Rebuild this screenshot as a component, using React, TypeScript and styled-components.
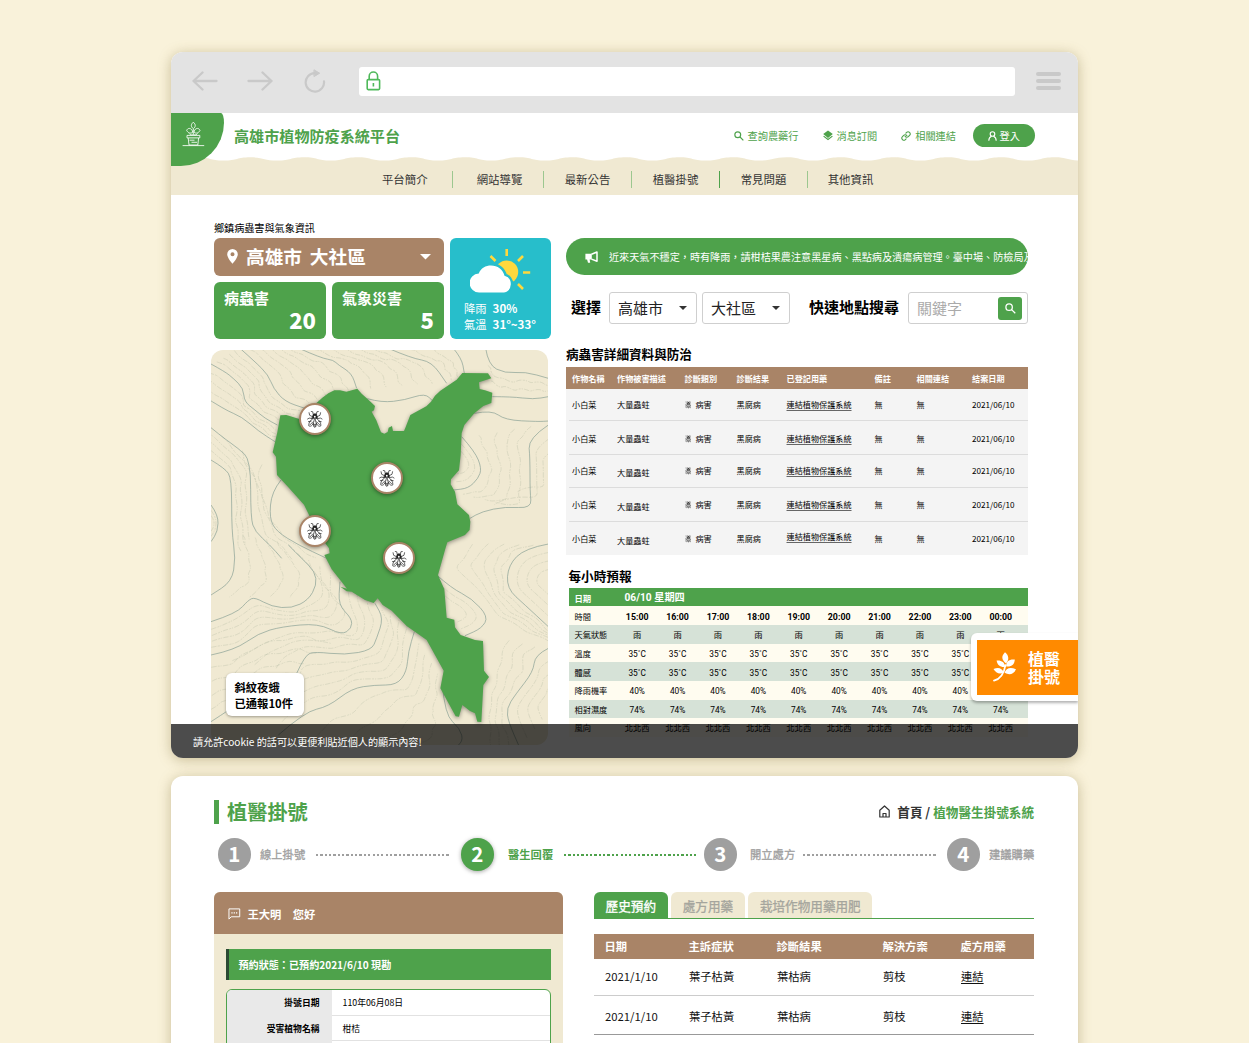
import React from 'react';
import styled, { createGlobalStyle, css } from 'styled-components';

const green = '#4ea24b';
const brown = '#a98467';
const sand = '#f0e9d2';
const grey = '#9f9f9f';
const cjk = `"Noto Sans CJK TC", "Noto Sans", sans-serif`;

const Global = createGlobalStyle`
  * { box-sizing: border-box; }
  html, body { margin: 0; padding: 0; }
  body { background: #f9f2da; font-family: ${cjk}; color: #000; overflow: hidden; }
`;

const Page = styled.main`
  width: 1249px;
  height: 1043px;
  overflow: hidden;
  padding: 52px 170.5px 0;
  display: flex;
  flex-direction: column;
  gap: 18px;
`;

const Window = styled.section<{ $h: number }>`
  position: relative;
  flex: none;
  width: 907.5px;
  height: ${p => p.$h}px;
  border-radius: 12px;
  background: #fff;
  box-shadow: 0 2px 13px rgba(130, 110, 50, 0.4);
`;

const Clip = styled.div`
  height: 100%;
  border-radius: 12px;
  overflow: hidden;
`;

/* ---------- browser bar ---------- */
const BrowserBar = styled.div`
  height: 61px;
  background: #e3e3e3;
  display: flex;
  align-items: center;
  padding: 0 17px 3px 21.5px;
`;
const Address = styled.div`
  width: 656px;
  height: 29px;
  border-radius: 3px;
  background: #fff;
  margin-left: 32.5px;
  padding-left: 7.5px;
  display: flex;
  align-items: center;
`;
const Burger = styled.div`
  width: 25px;
  height: 18px;
  margin-left: auto;
  display: flex;
  flex-direction: column;
  justify-content: space-between;
  i { height: 3.6px; border-radius: 2px; background: #c9c9c9; }
`;
const Gap = styled.span<{ $w: number }>`
  flex: none;
  width: ${p => p.$w}px;
`;

/* ---------- site header ---------- */
const Header = styled.header`
  height: 44px;
  display: flex;
  align-items: center;
  padding: 1px 43.5px 0 63.5px;
  color: ${green};
`;
const Brand = styled.h1`
  margin: 0;
  padding-bottom: 2px;
  font-size: 15.1px;
  line-height: 20px;
  font-weight: 700;
  flex: 1;
`;
const TopLink = styled.a<{ $gap: number }>`
  display: flex;
  align-items: center;
  gap: 4px;
  font-size: 10.2px;
  line-height: 16px;
  margin-right: ${p => p.$gap}px;
`;
const Login = styled.button`
  width: 61.5px;
  height: 23px;
  border: 0;
  border-radius: 12px;
  background: ${green};
  color: #fff;
  font: 10.2px/16px ${cjk};
  display: flex;
  align-items: center;
  justify-content: center;
  gap: 3px;
  padding: 0;
`;
const LogoCorner = styled.div`
  position: absolute;
  left: 0;
  top: 61px;
  width: 53px;
  height: 53px;
  background: ${green};
  border-radius: 0 3px 44px 0 / 0 10px 44px 0;
  padding: 8px 0 0 11.5px;
`;
const Nav = styled.nav`
  height: 38px;
  background: ${sand};
  position: relative;
  display: flex;
  padding: 14px 0 0 187px;
`;
const WaveArt = styled.svg`
  position: absolute;
  left: 0;
  top: 0;
`;
const NavItem = styled.a<{ $w: number; $first?: boolean; $strong?: boolean; $nudge?: number }>`
  width: ${p => p.$w}px;
  height: 17px;
  line-height: 17px;
  font-size: 11.4px;
  color: #333;
  text-align: center;
  border-left: ${p => (p.$first ? '0' : '1px')} solid ${p => (p.$strong ? green : '#9cc78f')};
  padding-left: ${p => p.$nudge || 0}px;
`;

/* ---------- dashboard ---------- */
const Content = styled.div`
  display: flex;
  padding: 25px 50px 0 40.5px;
  gap: 15px;
`;
const Left = styled.div`
  width: 340px;
  padding-left: 3px;
`;
const Caption = styled.div`
  font-size: 10.1px;
  line-height: 15px;
  height: 18px;
`;
const Cards = styled.div`
  display: grid;
  grid-template-columns: 112px 112px 101px;
  grid-template-rows: 37.5px 57px;
  gap: 6px;
`;
const PlaceCard = styled.div`
  grid-column: 1 / 3;
  background: ${brown};
  border-radius: 6px;
  color: #fff;
  display: flex;
  align-items: center;
  padding: 0 13px;
  font-size: 18.7px;
  line-height: 26px;
  font-weight: 700;
  span { flex: 1; margin-left: 8px; padding-bottom: 1.5px; word-spacing: 3.5px; }
`;
const CountCard = styled.div`
  background: ${green};
  border-radius: 6px;
  color: #fff;
  font-weight: 700;
  padding: 6px 10px;
  display: flex;
  flex-direction: column;
  span { font-size: 15px; line-height: 19px; }
  b { font-size: 22px; line-height: 24px; text-align: right; }
`;
const WeatherCard = styled.div`
  grid-column: 3;
  grid-row: 1 / 3;
  background: #27becb;
  border-radius: 6px;
  color: #fff;
  padding: 10px 0 0 14px;
  font-size: 11.3px;
  svg { display: block; margin: 0 0 6px 6px; }
`;
const WeatherLine = styled.div`
  line-height: 16px;
  white-space: nowrap;
  b { margin-left: 6px; font-size: 11.5px; }
`;
const MapBox = styled.div`
  position: relative;
  margin: 11px 0 0 -3px;
  width: 337px;
  height: 395px;
  border-radius: 12px;
  background: ${sand};
  overflow: hidden;
`;
const Pin = styled.div<{ $x: number; $y: number }>`
  position: absolute;
  left: ${p => p.$x - 16}px;
  top: ${p => p.$y - 16}px;
  width: 32px;
  height: 32px;
  border-radius: 50%;
  border: 2px solid ${brown};
  background: #fff;
  box-shadow: 0 1px 4px rgba(0, 0, 0, 0.45);
  display: flex;
  align-items: center;
  justify-content: center;
  padding-top: 2px;
`;
const MapNote = styled.div`
  position: absolute;
  left: 15px;
  top: 323px;
  width: 78px;
  height: 43px;
  border-radius: 6px;
  background: #fff;
  box-shadow: 0 1px 3px rgba(0, 0, 0, 0.35);
  padding: 6px 0 0 8.5px;
  font-size: 11.3px;
  line-height: 16.5px;
  font-weight: 700;
  white-space: nowrap;
`;

const Right = styled.div`
  width: 462px;
  padding-top: 18px;
`;
const Notice = styled.div`
  height: 37px;
  border-radius: 19px;
  background: ${green};
  color: #fff;
  overflow: hidden;
  display: flex;
  align-items: center;
  gap: 11px;
  padding-left: 19px;
  font-size: 10.12px;
  white-space: nowrap;
  svg { flex: none; }
`;
const Filters = styled.div`
  display: flex;
  align-items: center;
  margin-top: 17px;
  height: 32px;
  font-size: 15px;
  line-height: 20px;
  padding-left: 5px;
  b { white-space: nowrap; padding-bottom: 2px; }
`;
const Select = styled.div`
  width: 88px;
  height: 32px;
  border: 1px solid #cfcfcf;
  border-radius: 3px;
  display: flex;
  align-items: center;
  justify-content: space-between;
  padding: 0 9px 0 8px;
  color: #222;
`;
const SearchBox = styled.div`
  width: 120px;
  height: 32px;
  border: 1px solid #cfcfcf;
  border-radius: 3px;
  display: flex;
  align-items: center;
  justify-content: space-between;
  padding: 0 5px 0 8px;
  color: #aaa;
`;
const SearchButton = styled.span`
  width: 24px;
  height: 23px;
  border-radius: 3px;
  background: ${green};
  color: #fff;
  display: flex;
  align-items: center;
  justify-content: center;
`;
const SectionTitle = styled.h2<{ $top: number; $left?: number }>`
  margin: ${p => p.$top}px 0 0 ${p => p.$left || 0}px;
  font-size: 12.6px;
  line-height: 20px;
  font-weight: 700;
`;
const pestGrid = css`
  display: grid;
  grid-template-columns: 45px 67.5px 52px 50px 88px 42px 55.5px 1fr;
  align-items: center;
`;
const PestTable = styled.div`
  width: 461.5px;
  margin-top: 3px;
  background: #f4f4f4;
  font-size: 8.15px;
  line-height: 12px;
  white-space: nowrap;
`;
const PestHead = styled.div`
  ${pestGrid}
  height: 22px;
  padding: 2px 0 0 6px;
  background: ${brown};
  color: #fff;
  font-weight: 700;
`;
const PestRow = styled.div<{ $h: number; $pad: number; $last?: boolean }>`
  ${pestGrid}
  height: ${p => p.$h}px;
  margin-left: 2.5px;
  padding: ${p => p.$pad}px 0 0 3.5px;
  border-bottom: ${p => (p.$last ? '0' : '1px')} solid #dcdcdc;
`;
const Drop = styled.span<{ $y?: number }>`
  padding-top: ${p => (p.$y && p.$y > 0 ? p.$y * 2 : 0)}px;
  padding-bottom: ${p => (p.$y && p.$y < 0 ? -p.$y * 2 : 0)}px;
  display: flex;
  align-items: center;
  gap: 4px;
  u { text-underline-offset: 1.5px; text-decoration-thickness: 1px; text-decoration-color: #666; }
`;
const HourTable = styled.div`
  width: 459px;
  margin: 2px 0 0 2.5px;
  font-size: 8.2px;
  line-height: 12px;
  white-space: nowrap;
`;
const HourHead = styled.div`
  display: flex;
  align-items: center;
  height: 18.7px;
  background: ${green};
  color: #fff;
  padding: 1px 0 0 6px;
  b { font-size: 10.2px; width: 50px; }
  b:first-child { font-size: 8.4px; }
  b + b { width: auto; font-family: Roboto, ${cjk}; }
`;
const HourRow = styled.div<{ $tint?: boolean; $bold?: boolean }>`
  display: grid;
  grid-template-columns: 42.5px repeat(10, 40.4px);
  align-items: center;
  height: 18.65px;
  padding: 2px 0 0 6px;
  background: ${p => (p.$tint ? '#d6e2d7' : '#fffcf0')};
  font-family: Roboto, ${cjk};
  &:last-child { padding-top: 0; }
  span {
    text-align: center;
    font-weight: ${p => (p.$bold ? 700 : 400)};
    font-size: ${p => (p.$bold ? 8.8 : 8.3)}px;
  }
`;

const Floating = styled.aside`
  position: absolute;
  right: 0;
  top: 581px;
  width: 107.5px;
  height: 68px;
  border-radius: 6px 0 0 6px;
  background: #fff;
  box-shadow: 0 2px 3px rgba(0, 0, 0, 0.3);
  clip-path: inset(-8px 0 -8px -8px);
  padding: 6.5px 0 0 6.5px;
`;
const FloatingInner = styled.div`
  height: 55px;
  background: #ff8a00;
  color: #fff;
  display: flex;
  align-items: center;
  padding-left: 16px;
  gap: 11px;
  font-size: 16px;
  line-height: 18px;
  font-weight: 700;
`;
const Cookie = styled.div`
  position: absolute;
  left: 0;
  right: 0;
  bottom: 0;
  height: 34px;
  border-radius: 0 0 12px 12px;
  background: rgba(0, 0, 0, 0.7);
  color: #fff;
  font-size: 10.12px;
  line-height: 35px;
  padding-left: 22.5px;
`;

/* ---------- appointment page ---------- */
const Booking = styled.div`
  padding: 24px 44px 0 43.5px;
`;
const Row = styled.div`
  display: flex;
  align-items: center;
  justify-content: space-between;
`;
const PageTitle = styled.h2`
  margin: 0;
  height: 24px;
  border-left: 5px solid ${green};
  padding-left: 8px;
  color: ${green};
  font-size: 20.2px;
  line-height: 23px;
  font-weight: 700;
`;
const Crumbs = styled.div`
  display: flex;
  align-items: center;
  font-size: 12.6px;
  line-height: 20px;
  font-weight: 700;
  color: #333;
  padding-bottom: 1px;
  svg { margin-right: 7px; }
  em { font-style: normal; color: ${green}; margin-left: 3px; }
`;
const Steps = styled.div`
  display: grid;
  grid-template-columns: 243px 243px 243px 1fr;
  margin-top: 14px;
  padding-left: 4px;
`;
const Step = styled.div<{ $on?: boolean }>`
  display: flex;
  align-items: center;
  color: ${p => (p.$on ? green : grey)};
  font-weight: ${p => (p.$on ? 700 : 400)};
  -webkit-text-stroke: ${p => (p.$on ? 0 : 0.3)}px currentColor;
  font-size: 11.3px;
  white-space: nowrap;
`;
const Badge = styled.span<{ $on?: boolean }>`
  width: 32.5px;
  height: 32.5px;
  flex: none;
  border-radius: 50%;
  background: ${p => (p.$on ? green : grey)};
  box-shadow: ${p => (p.$on ? '0 1px 4px rgba(0,0,0,.35)' : 'none')};
  color: #fff;
  font-size: 20.5px;
  line-height: 31px;
  font-weight: 700;
  -webkit-text-stroke: 0;
  text-align: center;
`;
const Dots = styled.i<{ $ml: number }>`
  width: 132.500px;
  flex: none;
  height: 2px;
  margin-left: ${p => p.$ml}px;
  margin-top: 1px;
  background: repeating-linear-gradient(90deg, currentColor 0 2.2px, transparent 2.2px 4.350px);
`;
const Columns = styled.div`
  display: flex;
  margin-top: 21px;
  gap: 31px;
  align-items: flex-start;
`;
const Panel = styled.div`
  width: 349px;
  height: 200px;
  border-radius: 6px 6px 0 0;
  overflow: hidden;
  background: ${sand};
`;
const PanelHead = styled.div`
  height: 42.5px;
  background: ${brown};
  color: #fff;
  display: flex;
  align-items: center;
  gap: 7px;
  padding: 2px 0 0 14px;
  font-size: 11.3px;
  font-weight: 700;
`;
const Status = styled.div`
  margin: 14.5px 12px 0;
  height: 31px;
  background: ${green};
  border-left: 3px solid #2c4a33;
  color: #fff;
  padding-left: 9.5px;
  font-size: 10.1px;
  line-height: 32px;
  font-weight: 700;
`;
const Details = styled.div`
  margin: 9.5px 12px 0;
  border: 1px solid ${green};
  border-radius: 6px;
  overflow: hidden;
  background: #fff;
`;
const Detail = styled.div`
  display: grid;
  grid-template-columns: 105px 1fr;
  height: 25.7px;
  border-bottom: 1px solid #e2e2e2;
  font-size: 8.8px;
  line-height: 26.5px;
  b { background: #e9e9e9; text-align: right; padding-right: 12.5px; }
  span { padding-left: 10.5px; }
`;
const History = styled.div`
  width: 440px;
`;
const Tabs = styled.div`
  display: flex;
  gap: 3.6px;
  border-bottom: 1px solid ${green};
  height: 27px;
`;
const Tab = styled.div<{ $on?: boolean }>`
  height: 26px;
  border-radius: 6px 6px 0 0;
  padding: 0 11.6px;
  background: ${p => (p.$on ? green : sand)};
  color: ${p => (p.$on ? '#fff' : '#a5a59d')};
  font-size: 12.6px;
  -webkit-text-stroke: 0.3px currentColor;
  line-height: 28px;
`;
const HistoryRow = styled.div<{ $head?: boolean; $h: number; $line?: string; $pt?: number; $pb?: number }>`
  display: grid;
  grid-template-columns: 84px 88px 106px 78px 1fr;
  align-items: center;
  height: ${p => p.$h}px;
  margin-top: ${p => (p.$head ? 15 : 0)}px;
  padding: ${p => p.$pt || 0}px 0 ${p => p.$pb || 0}px ${p => (p.$head ? 10.5 : 11)}px;
  background: ${p => (p.$head ? brown : 'transparent')};
  color: ${p => (p.$head ? '#fff' : '#111')};
  font-weight: ${p => (p.$head ? 700 : 400)};
  font-size: 11.3px;
  line-height: 16px;
  border-bottom: ${p => (p.$line ? `1px solid ${p.$line}` : '0')};
  u { text-underline-offset: 2px; text-decoration-thickness: 1px; }
`;

/* ---------- icons ---------- */
type IconProps = { size?: number };

const ArrowIcon = ({ flip }: { flip?: boolean }) => (
  <svg width="26" height="20" viewBox="0 0 26 20" fill="none" stroke="#c9c9c9" strokeWidth="2.3"
    strokeLinecap="round" strokeLinejoin="round" transform={flip ? 'scale(-1 1)' : undefined}>
    <path d="M24.5 10H1.5M10.5 1.5L1.5 10l9 8.5" />
  </svg>
);
const ReloadIcon = () => (
  <svg width="22" height="24" viewBox="0 0 22 24" fill="none" stroke="#c9c9c9" strokeWidth="2.2" strokeLinecap="round">
    <path d="M10.500 4.200A9.200 9.200 0 1 0 20 12.300" />
    <path d="M10.3 1l5.400 3.200-5.400 3.200z" fill="#c9c9c9" strokeWidth="1" strokeLinejoin="round" />
  </svg>
);
const LockIcon = () => (
  <svg width="15" height="20" viewBox="0 0 15 20" fill="none" stroke="#4fb95a" strokeWidth="1.6">
    <rect x="1.2" y="8.6" width="12.4" height="10" rx="1" />
    <path d="M3.2 8.5V5.2a4.2 4.2 0 0 1 8.4 0v3.3M7.4 12v3.4" />
  </svg>
);
const PlantLogo = () => (
  <svg width="23" height="27" viewBox="0 0 23 27" fill="none" stroke="#fff" strokeWidth="0.85" strokeLinejoin="round">
    <path d="M11.3 1.2c2.6 2.3 2.6 4.4 0 6.6c-2.6-2.2-2.6-4.3 0-6.6zM11.300 7.800v6.400" />
    <path d="M10.700 11.300c-2.200 1.500-4.600.8-6-1.800c1-2.800 3.800-2.600 5.400-.4zM12 11.300c2.200 1.500 4.600.8 6-1.800c-1-2.800-3.800-2.600-5.400-.4z" />
    <path d="M10.800 13.800c-1.500.4-2.800 0-3.600-1.300M11.900 13.800c1.500.4 2.800 0 3.600-1.300" />
    <path d="M5 14.400h12.800v2.500H5zM6.200 17l.8 7h8.800l.8-7M7.500 19.200h5M9.500 21.300h5.500" />
    <path d="M.6 24.600h21.600" />
  </svg>
);
const SearchIcon = ({ size = 10 }: IconProps) => (
  <svg width={size} height={size} viewBox="0 0 12 12" fill="none" stroke="currentColor" strokeWidth="1.4">
    <circle cx="4.5" cy="4.5" r="3.5" />
    <path d="M7.2 7.2l4 4" />
  </svg>
);
const LayersIcon = () => (
  <svg width="10" height="11" viewBox="0 0 10 11" fill="currentColor">
    <path d="M5 .4l4.800 3.700L5 7.900.2 4.100zM1 5.700l4 3.100 4-3.100.8.700L5 10.200.200 6.400z" />
  </svg>
);
const LinkIcon = () => (
  <svg width="10" height="10" viewBox="0 0 24 24" fill="none" stroke="currentColor" strokeWidth="2.6" strokeLinecap="round">
    <path d="M10 13a5 5 0 0 0 7.540.54l3-3a5 5 0 0 0-7.070-7.070l-1.720 1.710" />
    <path d="M14 11a5 5 0 0 0-7.540-.54l-3 3a5 5 0 0 0 7.070 7.070l1.710-1.710" />
  </svg>
);
const UserIcon = () => (
  <svg width="9" height="10" viewBox="0 0 9 10" fill="none" stroke="currentColor" strokeWidth="1.1">
    <circle cx="4.5" cy="3" r="2.3" />
    <path d="M.8 9.800c0-2.600 1.200-4 2.700-4.500M8.200 9.800c0-2.600-1.200-4-2.700-4.500" />
  </svg>
);
const PlaceIcon = () => (
  <svg width="11" height="15" viewBox="0 0 11 15" fill="#fff" fillRule="evenodd">
    <path d="M5.500 0a5.300 5.300 0 0 0-5.300 5.300C.2 9 5.500 14.800 5.500 14.800S10.800 9 10.800 5.300A5.300 5.300 0 0 0 5.500 0zm0 7.200a2 2 0 1 1 0-4 2 2 0 0 1 0 4z" />
  </svg>
);
const Caret = ({ w, color }: { w: number; color: string }) => (
  <svg width={w} height={w / 2} viewBox="0 0 10 5" fill={color}><path d="M0 0h10L5 5z" /></svg>
);
const SunCloud = () => (
  <svg width="61" height="46" viewBox="0 0 61 46">
    <g stroke="#ffd83d" strokeWidth="2.6">
      <path d="M36.700 1v7M20.500 8l5 5M53 8l-5 5M53 24.500h7.200M48 36l5 5" />
    </g>
    <circle cx="36.700" cy="24" r="11.500" fill="#ffd83d" />
    <path d="M9.500 44.500a9.300 9.300 0 0 1-.7-19c2-5.500 7-8 12.200-8c6.500 0 12 4 13.500 10.300a8.600 8.600 0 0 1-.5 16.700z"
      fill="#fff" stroke="#27becb" strokeWidth="5" paintOrder="stroke" />
  </svg>
);
const HornIcon = () => (
  <svg width="13" height="12" viewBox="0 0 13 12">
    <path d="M6.500 3.200L12 1v9.300L6.500 8.100" fill="none" stroke="#fff" strokeWidth="1.5" strokeLinejoin="round" />
    <path d="M.4 2.800h6.400v5.800H.4zM2 8.200h2.600l.6 3.600H3z" fill="#fff" />
  </svg>
);
const FlyIcon = ({ size = 17 }: IconProps) => (
  <svg width={size * 0.92} height={size} viewBox="0.700 0 16.600 18" fill="none" stroke="#222" strokeWidth="0.75" strokeLinecap="round">
    <path d="M7.300 3.500L6.800.8 5.200.4M10.700 3.500l.5-2.700 1.600-.4M6.500 6L3.500 4.500 2.900 1.800M11.500 6l3-1.500.6-2.700M6 8L3 7.500 1.300 8.500M12 8l3-.5 1.700 1M5 10.800l-2.800.5M13 10.800l2.800.5" />
    <path d="M7 4.200c0-1.600 4-1.600 4 0l.8 3.600H6.200z" fill="#222" />
    <circle cx="9" cy="6.100" r="1" fill="#fff" stroke="none" />
    <path d="M7 8C4 9.800 2.200 13 2.600 15.800c2.600 1.300 5-1.200 5.900-7M11 8c3 1.800 4.800 5 4.400 7.800c-2.600 1.300-5-1.200-5.900-7" />
    <path d="M4 14.500l3-3M14 14.500l-3-3M7.500 13c0 2.400.5 4.200 1.500 4.600c1-.4 1.500-2.200 1.500-4.600M7.700 14.200h2.600M8 15.800h2" />
  </svg>
);
const SproutIcon = () => (
  <svg width="24" height="30" viewBox="0 0 24 30" fill="#fff">
    <path d="M1 28.600c6-1.500 10-6.500 11.400-15.500" stroke="#fff" strokeWidth="1.8" fill="none" strokeLinecap="round" />
    <path d="M13 11.500C8.300 7.500 8.300 4 12 .3c4 3.300 4.300 7.500 1 11.200z" />
    <path d="M12.300 15C7 15.500 4.400 13 3.600 8.500c5-.4 8.100 1.600 8.700 6.500z" />
    <path d="M10.800 20.500C6.500 22.600 2.700 21 .5 17c4.700-2.200 8.500-1.100 10.300 3.500z" />
    <path d="M13.200 14.500c-.2-5 3-7.600 8.600-7c-.2 5-3.200 7.600-8.600 7z" />
    <path d="M11.500 20.800c1.600-4.800 5.600-6 11.500-3.600c-2.300 5-6.500 6.200-11.500 3.600z" />
  </svg>
);
const HomeIcon = () => (
  <svg width="11" height="13" viewBox="0 0 11 13" fill="none" stroke="#333" strokeWidth="1.2" strokeLinejoin="round">
    <path d="M.8 5.200L5.500 1l4.700 4.200V12H.8zM4 12V8.500h3V12" />
  </svg>
);
const ChatIcon = () => (
  <svg width="12.5" height="12" viewBox="0 0 13 12" fill="none" stroke="#fff" strokeWidth="1">
    <path d="M1 11.300V.7h11.200v8.200H3.300z" />
    <path d="M3.500 4.800h1.300M5.900 4.800h1.300M8.300 4.800h1.300" strokeWidth="1.3" />
  </svg>
);

/* ---------- topographic map ---------- */
type Pt = [number, number];
const P = (s: string): Pt[] => s.split(' ').map(q => q.split(',').map(Number) as Pt);

const ridge: Record<string, Pt[]> = {
  a: P('18,57 60,80 85,100 115,130 118,170 150,195 180,220 217,240'),
  b: P('-10,150 60,195 110,215 160,258 210,290'),
  c: P('-10,225 50,275 100,310 137,345 137,520 150,560 195,600 230,640'),
  d: P('18,345 60,370 80,400 80,560 92,640 80,710 18,750'),
  e: P('18,480 40,510 38,560 18,590'),
  f: P('105,10 150,50 190,90 205,130 240,170 300,190'),
  g: P('282,10 350,40 385,45 400,60 440,85 455,130'),
  h: P('487,161 530,173 600,165 660,145 685,170'),
  i: P('550,10 620,40 680,50 725,115'),
  j: P('745,10 770,40 778,85'),
  k: P('842,10 850,60 900,85 960,80 1030,100'),
  l: P('862,155 920,155 985,163 1030,155'),
  m: P('808,205 860,195 900,225 1000,230 1030,228'),
  n: P('1030,240 970,280 975,340 975,440 980,490 900,485 830,500 795,520'),
  o: P('770,275 810,320 830,370 820,400 790,430 745,435'),
  p: P('228,405 200,440 193,520 215,560 280,600 365,640'),
  q: P('1030,597 960,610 910,660 905,730 960,780 1030,845'),
  r: P('18,830 95,805 130,765 150,757 200,785 260,790 310,765 335,720 330,680 290,640 250,600'),
  s: P('18,930 90,915 160,865 230,845 340,835 410,870 440,850 440,820 400,780 405,710'),
  t: P('275,985 300,930 330,920 420,930 500,915 515,880 535,820 510,775'),
  u: P('220,1170 300,1100 370,1085 440,1030 510,1020 575,1020 605,980 610,920 628,860'),
  v: P('712,1020 720,1110 765,1150 775,1190 740,1215'),
  w: P('695,690 740,730 800,760 850,815 830,850 780,872'),
  x: P('1030,910 990,930 985,980 930,1050 905,1090 910,1130 945,1210'),
  y: P('18,1130 80,1090 120,1060 230,1010'),
};

const sample = (pts: Pt[], n: number): Pt[] => {
  const d = [0];
  for (let i = 1; i < pts.length; i++) d.push(d[i - 1] + Math.hypot(pts[i][0] - pts[i - 1][0], pts[i][1] - pts[i - 1][1]));
  return Array.from({ length: n }, (_, k) => {
    const at = (d[d.length - 1] * k) / (n - 1);
    let i = 1;
    while (i < d.length - 1 && d[i] < at) i++;
    const t = (at - d[i - 1]) / (d[i] - d[i - 1]);
    return [pts[i - 1][0] + (pts[i][0] - pts[i - 1][0]) * t, pts[i - 1][1] + (pts[i][1] - pts[i - 1][1]) * t] as Pt;
  });
};
const curve = (pts: Pt[]) => {
  let out = `M${pts[0].join(' ')}`;
  for (let i = 1; i < pts.length - 1; i++) {
    const [x, y] = pts[i];
    out += `Q${x} ${y} ${((x + pts[i + 1][0]) / 2).toFixed(1)} ${((y + pts[i + 1][1]) / 2).toFixed(1)}`;
  }
  return `${out}L${pts[pts.length - 1].join(' ')}`;
};
const between = (a: Pt[], b: Pt[], n: number): string[] => {
  const A = sample(a, 24);
  const B = sample(b, 24);
  return Array.from({ length: n }, (_, k) => {
    const t = (k + 1) / (n + 1);
    return curve(A.map(([x, y], i) => [
      x * (1 - t) + B[i][0] * t + Math.sin(i * 1.3 + k) * 3,
      y * (1 - t) + B[i][1] * t + Math.cos(i * 1.1 + k) * 3,
    ] as Pt));
  });
};
const shrink = (a: Pt[], cx: number, cy: number, n: number): string[] =>
  Array.from({ length: n }, (_, k) => {
    const t = 1 - (k + 1) / (n + 1.5);
    return curve(a.map(([x, y]) => [cx + (x - cx) * t, cy + (y - cy) * t] as Pt));
  });

const fine: string[] = [
  ...between(ridge.a, ridge.b, 3),
  ...between(ridge.a, ridge.f, 4),
  ...between(ridge.f, ridge.g, 5),
  ...between(ridge.g, ridge.i, 5),
  ...between(ridge.i, ridge.j, 2),
  ...between(ridge.c, ridge.p, 3),
  ...between(ridge.c.slice(0, 6), ridge.d.slice(0, 5), 3),
  ...between(ridge.k, ridge.l, 2),
  ...between(ridge.r, ridge.s, 4),
  ...between(ridge.s, ridge.t, 3),
  ...between(ridge.t, ridge.u, 4),
  ...between(ridge.d.slice(3), ridge.r.slice().reverse().slice(0, 5), 4),
  ...between(ridge.y, ridge.s.slice(0, 6), 4),
  ...between(ridge.u, ridge.v.slice().reverse(), 4),
  ...between(ridge.x, P('870,880 850,960 840,1060 830,1210'), 3),
  ...between(ridge.q, P('760,600 710,680 800,740 880,830 1030,900'), 5),
  ...between(ridge.o, ridge.n.slice(0, 6), 4),
  ...shrink(ridge.e, 18, 535, 2),
  ...shrink(ridge.o, 765, 350, 2),
  ...shrink(ridge.w, 740, 800, 2),
  ...shrink(ridge.q, 1040, 710, 3),
  ...shrink(ridge.n, 1045, 380, 2),
  ...shrink(ridge.x, 1045, 1080, 3),
];

const region =
  'M226,211L244,210L283,222L310,195L337,172L352,158L370,145L388,136L405,136L424,140L457,131L470,146L487,161L510,183L507,196L500,200L514,226L528,262L538,266L548,261L551,248L561,243L564,258L597,258L602,246L616,210L664,184L678,170L690,152L706,137L755,104L772,84L849,85L859,100L822,112L824,132L840,136L862,143L859,174L835,183L808,205L778,240L770,265L767,330L762,376L738,403L737,418L750,440L757,478L792,510L796,530L794,555L780,570L727,592L720,615L699,690L718,733L725,818L748,824L750,847L767,870L810,885L834,888L837,977L852,996L835,1020L829,1131L817,1130L810,1105L795,1098L772,1080L762,1115L752,1114L706,1030L716,977L665,885L605,843L560,797L533,780L518,760L506,774L480,765L440,740L425,739L406,725L426,731L412,713L380,673L358,630L374,625L372,610L363,598L315,516L297,479L250,427L216,390L213,335L203,322L217,262Z';

const Terrain = () => (
  <svg width="337" height="395" viewBox="18 15 1011 1185" fill="none">
    <g stroke="#98a38c" strokeOpacity="0.42" strokeWidth="1.6" strokeDasharray="16 4 6 3 3 4">
      {fine.map((d, i) => <path key={i} d={d} />)}
    </g>
    <g stroke="#8ba196" strokeOpacity="0.85" strokeWidth="2.5">
      {Object.entries(ridge).map(([k, pts]) => <path key={k} d={curve(pts)} />)}
    </g>
    <path d={region} fill={green} style={{ filter: 'drop-shadow(0 4px 7px rgba(0,0,0,.4))' }} />
  </svg>
);

const wave = (() => {
  const p = 53.6;
  const first = 106.2 - p * 2;
  let d = `M${first} 0V3.6`;
  for (let x = first; x < 920; x += p) {
    d += `C${x + 14} 3.6 ${x + 13} 0.3 ${x + p / 2} 0.3C${x + p - 13} 0.3 ${x + p - 14} 3.6 ${x + p} 3.6`;
  }
  return `${d}V0Z`;
})();

/* ---------- data ---------- */
const nav = [
  { t: '平台簡介', w: 94.5, first: true },
  { t: '網站導覽', w: 91, nudge: 3 },
  { t: '最新公告', w: 88 },
  { t: '植醫掛號', w: 88 },
  { t: '常見問題', w: 88, strong: true },
  { t: '其他資訊', w: 86 },
];
const pestCols = ['作物名稱', '作物被害描述', '診斷類別', '診斷結果', '已登記用藥', '備註', '相關連結', '結案日期'];
const pestRows = [
  { h: 31.7, pad: 1, drop: 0, link: 0 },
  { h: 34, pad: 4, drop: 0, link: 0 },
  { h: 33, pad: 1, drop: 2, link: 0 },
  { h: 34, pad: 2, drop: 2, link: 0 },
  { h: 33.5, pad: 1, drop: 2, link: -1.5 },
];
const hours = ['15:00', '16:00', '17:00', '18:00', '19:00', '20:00', '21:00', '22:00', '23:00', '00:00'];
const forecast: [string, string][] = [
  ['天氣狀態', '雨'], ['溫度', '35˚C'], ['體感', '35˚C'], ['降雨機率', '40%'], ['相對濕度', '74%'], ['風向', '北北西'],
];
const pins: Pt[] = [[104, 69], [176, 128.4], [104, 181.4], [187.7, 208.6]];
const steps = [
  { t: '線上掛號', gap: 9.5, dots: 11 },
  { t: '醫生回覆', gap: 14.5, dots: 10.5, on: true },
  { t: '開立處方', gap: 13.5, dots: 8 },
  { t: '建議購藥', gap: 9.5 },
];

export default function App() {
  return (
    <>
      <Global />
      <Page>
        <Window $h={706}>
          <Clip>
            <BrowserBar>
              <ArrowIcon />
              <Gap $w={29} />
              <ArrowIcon flip />
              <Gap $w={31} />
              <ReloadIcon />
              <Address><LockIcon /></Address>
              <Burger><i /><i /><i /></Burger>
            </BrowserBar>
            <Header>
              <Brand>高雄市植物防疫系統平台</Brand>
              <TopLink $gap={24}><SearchIcon />查詢農藥行</TopLink>
              <TopLink $gap={24}><LayersIcon />消息訂閱</TopLink>
              <TopLink $gap={17}><LinkIcon />相關連結</TopLink>
              <Login><UserIcon />登入</Login>
            </Header>
            <Nav>
              <WaveArt width="908" height="5" viewBox="0 0 908 5">
                <path d={wave} fill="#fff" />
              </WaveArt>
              {nav.map(n => (
                <NavItem key={n.t} $w={n.w} $first={n.first} $strong={n.strong} $nudge={n.nudge}>{n.t}</NavItem>
              ))}
            </Nav>
            <LogoCorner><PlantLogo /></LogoCorner>
            <Content>
              <Left>
                <Caption>鄉鎮病蟲害與氣象資訊</Caption>
                <Cards>
                  <PlaceCard><PlaceIcon /><span>高雄市 大社區</span><Caret w={11} color="#fff" /></PlaceCard>
                  <CountCard><span>病蟲害</span><b>20</b></CountCard>
                  <CountCard><span>氣象災害</span><b>5</b></CountCard>
                  <WeatherCard>
                    <SunCloud />
                    <WeatherLine>降雨<b>30%</b></WeatherLine>
                    <WeatherLine>氣溫<b>31°~33°</b></WeatherLine>
                  </WeatherCard>
                </Cards>
                <MapBox>
                  <Terrain />
                  {pins.map(([x, y], i) => <Pin key={i} $x={x} $y={y}><FlyIcon /></Pin>)}
                  <MapNote>斜紋夜蛾<br />已通報10件</MapNote>
                </MapBox>
              </Left>
              <Right>
                <Notice>
                  <HornIcon />
                  近來天氣不穩定，時有降雨，請柑桔果農注意黑星病、黑點病及潰瘍病管理。臺中場、防檢局及
                </Notice>
                <Filters>
                  <b>選擇</b>
                  <Gap $w={8} />
                  <Select>高雄市<Caret w={8} color="#333" /></Select>
                  <Gap $w={5} />
                  <Select>大社區<Caret w={8} color="#333" /></Select>
                  <Gap $w={19} />
                  <b>快速地點搜尋</b>
                  <Gap $w={9} />
                  <SearchBox>關鍵字<SearchButton><SearchIcon size={11} /></SearchButton></SearchBox>
                </Filters>
                <SectionTitle $top={20}>病蟲害詳細資料與防治</SectionTitle>
                <PestTable>
                  <PestHead>{pestCols.map(c => <span key={c}>{c}</span>)}</PestHead>
                  {pestRows.map((r, i) => (
                    <PestRow key={i} $h={r.h} $pad={r.pad} $last={i === 4}>
                      <span>小白菜</span>
                      <Drop $y={r.drop}>大量蟲蛀</Drop>
                      <Drop><FlyIcon size={7.5} />病害</Drop>
                      <span>黑腐病</span>
                      <Drop $y={r.link}><u>連結植物保護系統</u></Drop>
                      <span>無</span>
                      <span>無</span>
                      <span>2021/06/10</span>
                    </PestRow>
                  ))}
                </PestTable>
                <SectionTitle $top={10.5} $left={2.5}>每小時預報</SectionTitle>
                <HourTable>
                  <HourHead><b>日期</b><b>06/10 星期四</b></HourHead>
                  <HourRow $bold><div>時間</div>{hours.map(h => <span key={h}>{h}</span>)}</HourRow>
                  {forecast.map(([label, v], i) => (
                    <HourRow key={label} $tint={i % 2 === 0}>
                      <div>{label}</div>
                      {hours.map(h => <span key={h}>{v}</span>)}
                    </HourRow>
                  ))}
                </HourTable>
              </Right>
            </Content>
          </Clip>
          <Floating>
            <FloatingInner><SproutIcon /><div>植醫<br />掛號</div></FloatingInner>
          </Floating>
          <Cookie>請允許cookie 的話可以更便利貼近個人的顯示內容!</Cookie>
        </Window>

        <Window $h={320}>
          <Booking>
            <Row>
              <PageTitle>植醫掛號</PageTitle>
              <Crumbs><HomeIcon />首頁 /<em>植物醫生掛號系統</em></Crumbs>
            </Row>
            <Steps>
              {steps.map((s, i) => (
                <Step key={s.t} $on={s.on}>
                  <Badge $on={s.on}>{i + 1}</Badge>
                  <Gap $w={s.gap} />
                  {s.t}
                  {s.dots && <Dots $ml={s.dots} />}
                </Step>
              ))}
            </Steps>
            <Columns>
              <Panel>
                <PanelHead><ChatIcon />王大明　您好</PanelHead>
                <Status>預約狀態：已預約2021/6/10 現勘</Status>
                <Details>
                  <Detail><b>掛號日期</b><span>110年06月08日</span></Detail>
                  <Detail><b>受害植物名稱</b><span>柑桔</span></Detail>
                  <Detail><b /><span /></Detail>
                </Details>
              </Panel>
              <History>
                <Tabs>
                  <Tab $on>歷史預約</Tab>
                  <Tab>處方用藥</Tab>
                  <Tab>栽培作物用藥用肥</Tab>
                </Tabs>
                <HistoryRow $head $h={25.5}>
                  <span>日期</span><span>主訴症狀</span><span>診斷結果</span><span>解決方案</span><span>處方用藥</span>
                </HistoryRow>
                {['#ccc', '#999'].map((line, i) => (
                  <HistoryRow key={line} $h={i ? 39 : 36.5} $pt={i ? 2 : 0} $pb={i ? 0 : 2} $line={line}>
                    <span>2021/1/10</span><span>葉子枯黃</span><span>葉枯病</span><span>剪枝</span><u>連結</u>
                  </HistoryRow>
                ))}
              </History>
            </Columns>
          </Booking>
        </Window>
      </Page>
    </>
  );
}
